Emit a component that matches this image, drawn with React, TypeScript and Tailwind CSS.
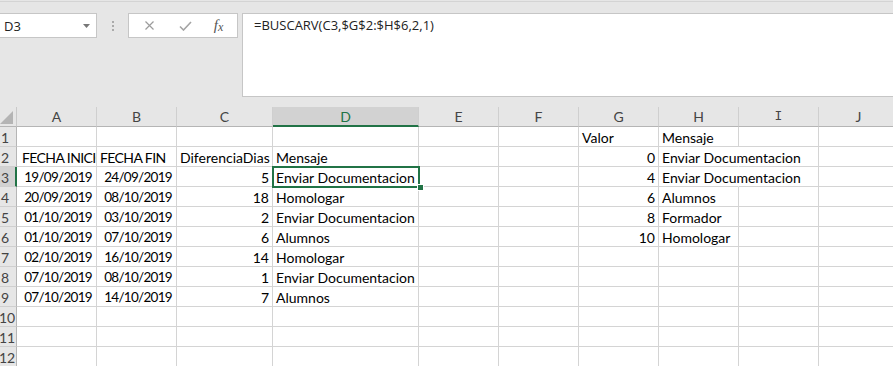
import clsx from "clsx";

const COLS = ["A", "B", "C", "D", "E", "F", "G", "H", "I", "J"];

const ROWS: string[][] = [
  ["", "", "", "", "", "", "Valor", "Mensaje", "", ""],
  ["FECHA INICIO", "FECHA FIN", "DiferenciaDias", "Mensaje", "", "", "0", "Enviar Documentacion", "", ""],
  ["19/09/2019", "24/09/2019", "5", "Enviar Documentacion", "", "", "4", "Enviar Documentacion", "", ""],
  ["20/09/2019", "08/10/2019", "18", "Homologar", "", "", "6", "Alumnos", "", ""],
  ["01/10/2019", "03/10/2019", "2", "Enviar Documentacion", "", "", "8", "Formador", "", ""],
  ["01/10/2019", "07/10/2019", "6", "Alumnos", "", "", "10", "Homologar", "", ""],
  ["02/10/2019", "16/10/2019", "14", "Homologar", "", "", "", "", "", ""],
  ["07/10/2019", "08/10/2019", "1", "Enviar Documentacion", "", "", "", "", "", ""],
  ["07/10/2019", "14/10/2019", "7", "Alumnos", "", "", "", "", "", ""],
  ["", "", "", "", "", "", "", "", "", ""],
  ["", "", "", "", "", "", "", "", "", ""],
  ["", "", "", "", "", "", "", "", "", ""],
];

function FormulaBar() {
  return (
    <div className="flex h-[97px] items-start pt-[13px]">
      {/* name box */}
      <div className="flex h-[25px] w-[97px] items-center justify-between border border-l-0 border-[#c6c6c6] bg-white pl-[4px] pr-[6px] font-['Open_Sans'] text-[13px] leading-[18px] text-[#222]">
        <span>D3</span>
        <svg width="7" height="4" viewBox="0 0 7 4">
          <polygon points="0,0 7,0 3.5,4" fill="#777" />
        </svg>
      </div>
      <div className="flex h-[25px] w-[31px] flex-col items-center justify-center gap-[2px]">
        <span className="h-[2px] w-[2px] bg-[#aaa]" />
        <span className="h-[2px] w-[2px] bg-[#aaa]" />
        <span className="h-[2px] w-[2px] bg-[#aaa]" />
      </div>
      {/* cancel / enter / fx */}
      <div className="flex h-[25px] w-[110px] items-center border border-[#c6c6c6] bg-white">
        <div className="flex w-[39px] justify-center pl-[1px]">
          <svg width="9" height="9" viewBox="0 0 9 9">
            <path d="M0.5 0.5 L8.5 8.5 M8.5 0.5 L0.5 8.5" stroke="#9c9c9c" strokeWidth="1.2" />
          </svg>
        </div>
        <div className="flex w-[30px] justify-center pl-[4px]">
          <svg width="13" height="10" viewBox="0 0 13 10">
            <path d="M1 5.5 L4.5 9 L12 1" stroke="#a4a4a4" strokeWidth="1.6" fill="none" />
          </svg>
        </div>
        <div className="flex flex-1 justify-center pl-[2px] font-['Liberation_Serif'] italic leading-none text-[#555]">
          <span className="text-[15px]">f</span>
          <span className="mt-[3px] text-[12px]">x</span>
        </div>
      </div>
      <div className="w-[4px]" />
      {/* formula input */}
      <div className="h-[84px] flex-1 border border-r-0 border-[#c6c6c6] bg-white pl-[11px] pt-[2px] font-['Open_Sans'] text-[13px] leading-[18px] text-[#222]">
        =BUSCARV(C3,$G$2:$H$6,2,1)
      </div>
    </div>
  );
}

function Sheet() {
  return (
    <div className="grid grid-cols-[17px_80px_80px_96px_146px_80px_80px_80px_80px_80px_80px] auto-rows-[20px] font-['Lato'] text-[14px] leading-[17px]">
      {/* corner */}
      <div className="flex items-end justify-end border-b border-r border-b-[#b5b5b5] border-r-[#c9c9c9] bg-[#e6e6e6] pb-[2px] pr-[3px]">
        <svg width="13" height="13" viewBox="0 0 13 13">
          <polygon points="13,0 13,13 0,13" fill="#b4b4b4" />
        </svg>
      </div>
      {COLS.map((c) => (
        <div
          key={c}
          className={clsx(
            "flex items-center justify-center border-r border-r-[#cfcfcf]",
            c === "D"
              ? "border-b-2 border-b-[#217346] bg-[#d2d2d2] text-[#217346]"
              : "border-b border-b-[#b5b5b5] bg-[#e6e6e6] text-[#444]",
            c === "I" && "font-['Liberation_Mono'] text-[13px]"
          )}
        >
          {c}
        </div>
      ))}

      {ROWS.map((cells, r) => {
        const rowNo = r + 1;
        return [
          <div
            key={`h${rowNo}`}
            className={clsx(
              "flex items-end border-b border-b-[#cfcfcf] text-[#444]",
              rowNo === 3
                ? "border-r-2 border-r-[#217346] bg-[#d2d2d2]"
                : "border-r border-r-[#b5b5b5] bg-[#e6e6e6]",
              rowNo >= 10 ? "-indent-[1px]" : "pl-[1px]"
            )}
          >
            {rowNo}
          </div>,
          ...cells.map((t, ci) => {
            const date = t.includes("/");
            const right = /^[\d/]+$/.test(t);
            const over = ci === 7 && (rowNo === 2 || rowNo === 3);
            const selected = ci === 3 && rowNo === 3;
            return (
              <div
                key={`${rowNo}-${ci}`}
                className={clsx(
                  "flex items-end whitespace-nowrap border-b border-r border-b-[#d4d4d4] text-black",
                  right ? "justify-end" : "pl-[3px]",
                  right && (date ? "pr-[4px] text-[13.5px] tracking-[-0.7px]" : "pr-[3px]"),
                  rowNo === 2 && ci < 2 && "tracking-[-0.6px]",
                  ci === 0 && rowNo === 2 && "pl-[5px]",
                  over ? "relative z-10 overflow-visible border-r-transparent" : "overflow-hidden border-r-[#d4d4d4]",
                  selected && "relative overflow-visible"
                )}
              >
                {t}
                {selected && (
                  <>
                    <div className="pointer-events-none absolute -left-px -top-px h-[22px] w-[148px] border-2 border-[#217346]" />
                    <div className="absolute left-[144px] top-[17px] h-[7px] w-[7px] border border-white bg-[#217346]" />
                  </>
                )}
              </div>
            );
          }),
        ];
      })}
    </div>
  );
}

export default function App() {
  return (
    <div className="h-[366px] w-[893px] overflow-hidden bg-[#e6e6e6]">
      <div className="relative">
        <div className="absolute inset-x-0 top-[1px] h-px bg-[#d4d4d4]" />
      </div>
      <FormulaBar />
      <div className="h-[10px]" />
      <div className="bg-white">
        <Sheet />
      </div>
    </div>
  );
}
